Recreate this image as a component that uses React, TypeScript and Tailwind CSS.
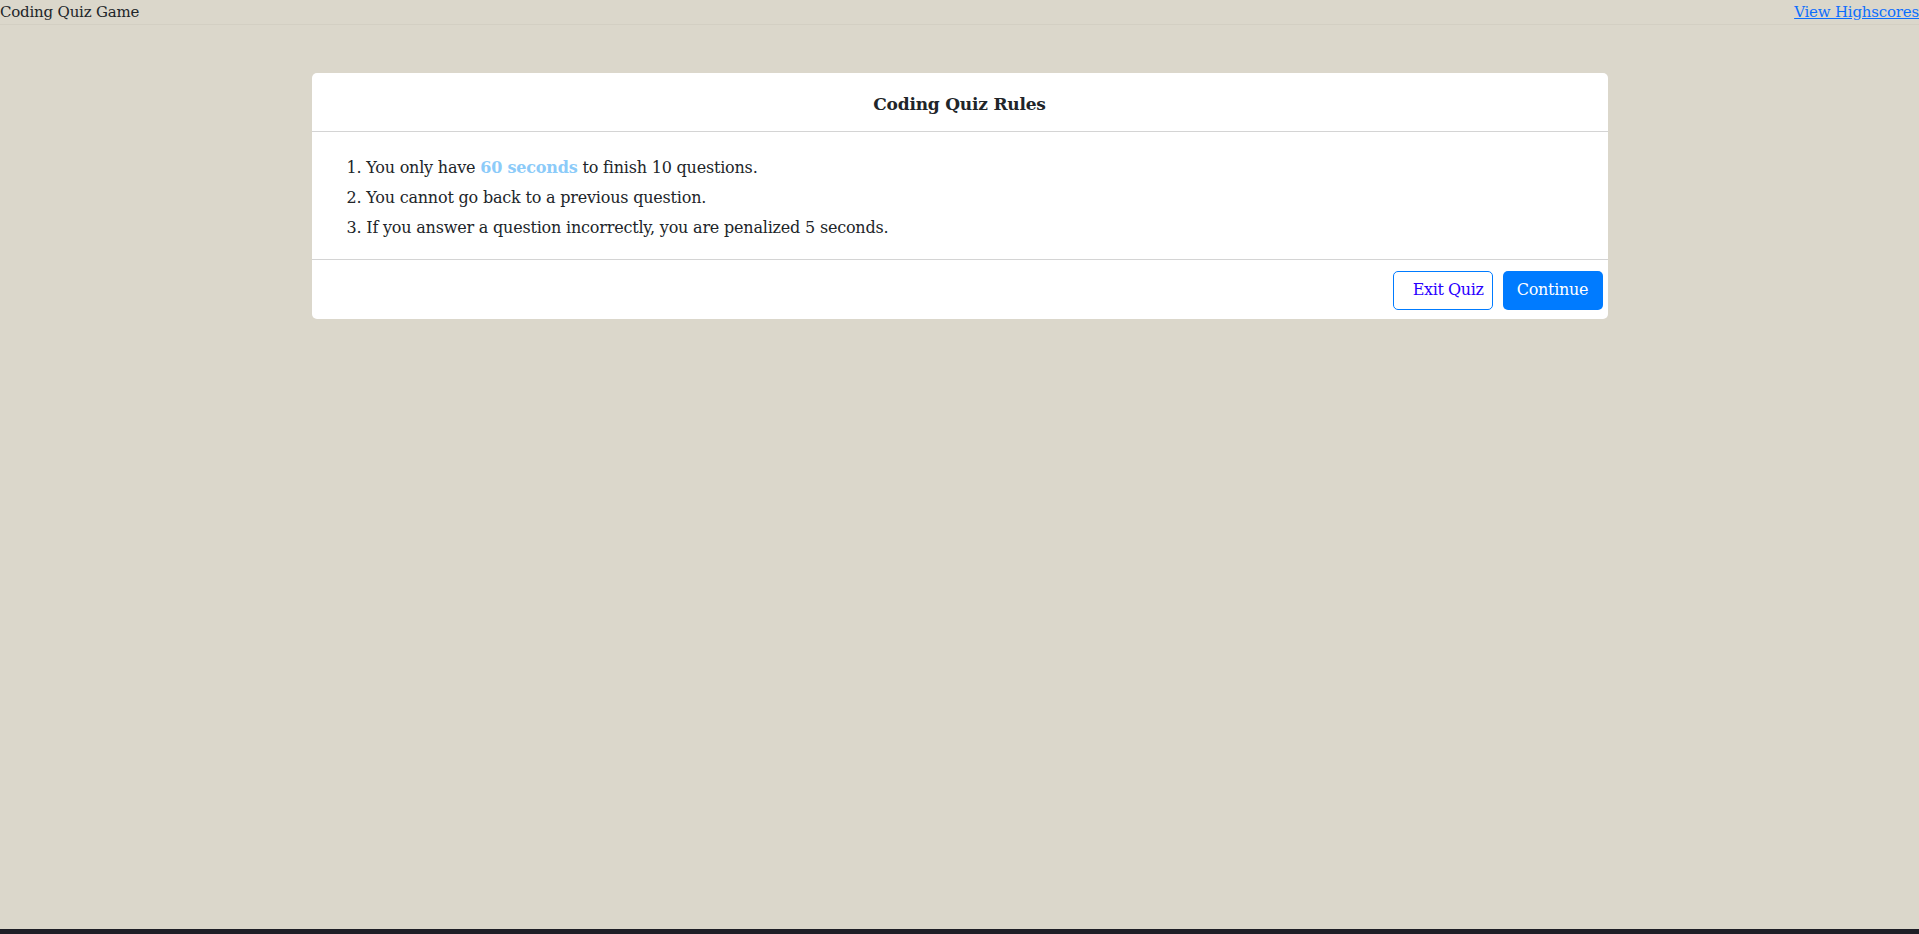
import React from 'react';

const serif = { fontFamily: '"DejaVu Serif", "Liberation Serif", serif' };

const rules = [
  <>You only have <span className="font-bold text-[#8ccbf9]">60 seconds</span> to finish 10 questions.</>,
  <>You cannot go back to a previous question.</>,
  <>If you answer a question incorrectly, you are penalized 5 seconds.</>
];

const App: React.FC = () => {
  return (
    <div className="flex flex-col h-[934px] overflow-hidden text-[#212529]" style={serif}>
      <div className="flex-1 bg-[#dbd7cb]">
        {/* Top bar */}
        <header className="flex items-start justify-between h-[25px] border-b border-[#d3cfc3] text-[15px] leading-[24px] tracking-[-0.2px]">
          <span>Coding Quiz Game</span>
          <a href="#" className="text-[#0d6efd] underline">View Highscores</a>
        </header>

        {/* Rules card */}
        <div className="mx-auto mt-[48px] w-[1296px] bg-white rounded-[5px]">
          <div className="h-[59px] flex items-center justify-center border-b border-[#d4d4d4]">
            <h2 className="text-[17px] font-bold tracking-[-0.2px] pt-[6px]">Coding Quiz Rules</h2>
          </div>
          <ol className="h-[128px] pl-[35px] pt-[21px] text-[16px] tracking-[-0.2px] border-b border-[#d4d4d4]">
            {rules.map((rule, i) => (
              <li key={i} className="leading-[30px]">
                {i + 1}. {rule}
              </li>
            ))}
          </ol>
          <div className="h-[59px] flex items-center justify-end gap-[10px] pr-[5px] pt-[1px]">
            <button className="w-[100px] h-[39px] border border-[#007bff] rounded-[5px] bg-white text-[#2a00ff] text-[16px] text-right pr-[8px] tracking-[-0.4px]">
              Exit Quiz
            </button>
            <button className="w-[100px] h-[39px] rounded-[5px] bg-[#007bff] text-white text-[16px] tracking-[-0.3px]">
              Continue
            </button>
          </div>
        </div>
      </div>
      <div className="h-[5px] bg-[#1e1e26]" />
    </div>
  );
};

export default App;
